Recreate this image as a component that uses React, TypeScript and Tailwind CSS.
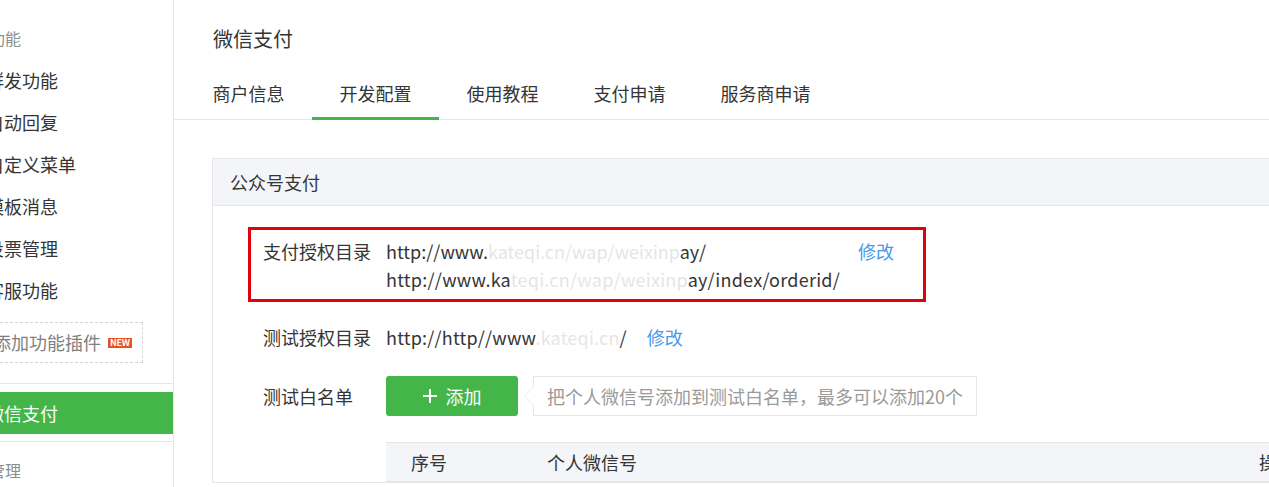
import React from 'react';

const font = { fontFamily: '"Noto Sans CJK SC", "Noto Sans", sans-serif' };

const menuItems = ['群发功能', '自动回复', '自定义菜单', '模板消息', '投票管理', '客服功能'];
const tabs = ['商户信息', '开发配置', '使用教程', '支付申请', '服务商申请'];

const Sidebar = () => (
  <div className="w-[174px] shrink-0 border-r border-[#e7e7eb] overflow-hidden pt-[17px]">
    <div className="h-[42px] flex items-center text-[16px] text-[#8d8d8d] whitespace-nowrap">
      <span className="-ml-[11px]">功能</span>
    </div>
    {menuItems.map((m) => (
      <div key={m} className="h-[42px] flex items-center text-[18px] text-[#353535] whitespace-nowrap">
        <span className="-ml-[14px]">{m}</span>
      </div>
    ))}
    <div className="mt-[11px] -ml-[20px] w-[163px] h-[41px] border border-dashed border-[#d3d4d6] flex items-center whitespace-nowrap">
      <span className="ml-[12px] text-[18px] text-[#7f7f7f]">添加功能插件</span>
      <span className="ml-[7px] bg-[#e8531d] text-white text-[9px] font-bold leading-[10px] px-[2px] tracking-tight">
        NEW
      </span>
    </div>
    <div className="mt-[20px] h-px bg-[#e7e7eb]" />
    <div className="mt-[8px] h-[42px] bg-[#44b549] flex items-center text-[18px] text-white whitespace-nowrap">
      <span className="-ml-[14px]">微信支付</span>
    </div>
    <div className="mt-[7px] h-px bg-[#e7e7eb]" />
    <div className="mt-[7px] h-[42px] flex items-center text-[16px] text-[#8d8d8d] whitespace-nowrap">
      <span className="-ml-[11px]">管理</span>
    </div>
  </div>
);

const Faded = ({ children }: { children: React.ReactNode }) => (
  <span className="text-[#e6e6e6]">{children}</span>
);

export default function App() {
  return (
    <div className="w-[1269px] h-[487px] overflow-hidden bg-white flex" style={font}>
      <Sidebar />
      <div className="flex-1 min-w-0 pt-[25px] text-[#353535]">
        <div className="pl-[39px] h-[28px] leading-[28px] text-[20px]">微信支付</div>
        <div className="mt-[16px] flex border-b border-[#e7e7eb] pl-[11px]">
          {tabs.map((t, i) => (
            <div
              key={t}
              className={
                i === 1
                  ? 'px-[27.5px] h-[51px] -mb-px flex items-center text-[18px] border-b-[3px] border-[#44b549]'
                  : 'px-[27.5px] h-[51px] -mb-px flex items-center text-[18px] border-b-[3px] border-transparent'
              }
            >
              {t}
            </div>
          ))}
        </div>

        <div className="mt-[38px] ml-[38px] w-[1140px] border border-[#e7e7eb]">
          <div className="h-[47px] bg-[#f4f5f9] border-b border-[#e7e7eb] flex items-center pl-[17px] text-[18px]">
            公众号支付
          </div>

          <div className="mt-[21px] ml-[35px] w-[678px] border-[3px] border-[#e2000b] pl-[12px] pt-[7px] pb-[6px] flex text-[18px] leading-[28px]">
            <div className="w-[123px] shrink-0">支付授权目录</div>
            <div className="w-[472px] shrink-0 whitespace-nowrap">
              <div>
                http://www.<Faded>kateqi.cn/wap/weixinp</Faded>ay/
              </div>
              <div className="tracking-[0.25px]">
                http://www.ka<Faded>teqi.cn/wap/weixinp</Faded>ay/index/orderid/
              </div>
            </div>
            <div className="text-[#459ae9]">修改</div>
          </div>

          <div className="mt-[21px] ml-[50px] flex text-[18px] leading-[28px] whitespace-nowrap">
            <div className="w-[123px] shrink-0">测试授权目录</div>
            <div className="tracking-[0.2px]">
              http://http//www<Faded>.kateqi.cn</Faded>/
            </div>
            <div className="ml-[20px] text-[#459ae9]">修改</div>
          </div>

          <div className="mt-[25px] ml-[50px] flex items-center text-[18px] whitespace-nowrap">
            <div className="w-[123px] shrink-0">测试白名单</div>
            <div className="w-[132px] h-[40px] rounded-[3px] bg-[#44b549] text-white flex items-center justify-center gap-[9px]">
              <svg width="14" height="14" viewBox="0 0 14 14">
                <path d="M7 0v14M0 7h14" stroke="white" strokeWidth="2" />
              </svg>
              <span>添加</span>
            </div>
            <div className="relative ml-[15px] h-[40px] border border-[#e4e8eb] flex items-center px-[13px] text-[#9a9a9a]">
              <span className="absolute -left-[10px] top-[9px] w-0 h-0 border-y-[10px] border-y-transparent border-r-[10px] border-r-[#e4e8eb]" />
              <span className="absolute -left-[9px] top-[10px] w-0 h-0 border-y-[9px] border-y-transparent border-r-[9px] border-r-white" />
              把个人微信号添加到测试白名单，最多可以添加20个
            </div>
          </div>

          <div className="mt-[26px] ml-[173px] h-[40px] bg-[#f4f5f9] border-y border-[#e7e7eb] flex items-center text-[18px] whitespace-nowrap">
            <div className="w-[161px] pl-[25px]">序号</div>
            <div className="w-[712px]">个人微信号</div>
            <div>操作</div>
          </div>
        </div>
      </div>
    </div>
  );
}
